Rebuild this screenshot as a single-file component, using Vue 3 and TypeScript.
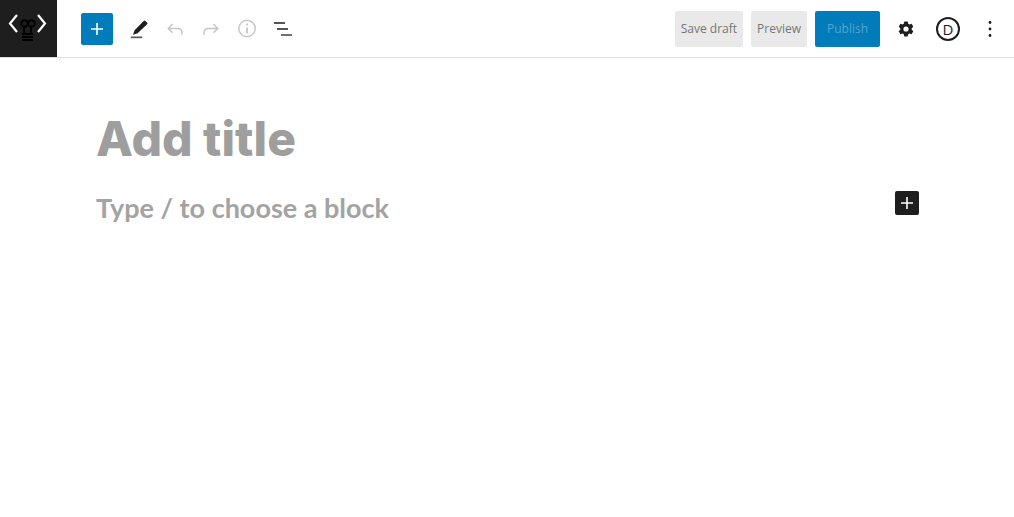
<template>
  <div class="editor">
    <header class="toolbar">
      <a class="logo" aria-label="Back">
        <svg width="57" height="57" viewBox="0 0 57 57" fill="none">
          <path d="M17 15 L10 23.5 L17 32 M38 15 L45 23.5 L38 32" stroke="#fff" stroke-width="2.2" />
          <circle cx="24.5" cy="23.5" r="3.3" stroke="#000" stroke-width="2" />
          <circle cx="31.5" cy="23.5" r="3.3" stroke="#000" stroke-width="2" />
          <path d="M24 27v6M31 27v6" stroke="#000" stroke-width="1.6" />
          <path d="M22 34h11M22 37h11M22 40h11" stroke="#000" stroke-width="1.8" />
        </svg>
      </a>
      <div class="tools">
        <button class="add" aria-label="Add block">
          <svg width="24" height="24" viewBox="0 0 24 24"><path d="M18 11.2h-5.2V6h-1.6v5.2H6v1.6h5.2V18h1.6v-5.2H18z" fill="#fff" /></svg>
        </button>
        <button class="icon" aria-label="Tools">
          <svg width="24" height="24" viewBox="0 0 24 24"><path d="M3.8 21.2h11.4v-1.7H3.8z" fill="#1e1e1e" opacity="0.75" /><path d="M20.1 5.6 18.4 4a1.2 1.2 0 0 0-1.7 0L7.6 13.2 6 17.8l4.6-1.5 9.5-9a1.2 1.2 0 0 0 0-1.7z" fill="#1e1e1e" /></svg>
        </button>
        <button class="icon" aria-label="Undo">
          <svg width="24" height="24" viewBox="0 0 24 24" fill="none" stroke="#c6c6c6" stroke-width="1.5"><path d="M9.6 7 5.2 11.4l4.4 4.3M5.4 11.4h9.6c2.4 0 3.9 1.6 3.9 4v2.4" /></svg>
        </button>
        <button class="icon" aria-label="Redo">
          <svg width="24" height="24" viewBox="0 0 24 24" fill="none" stroke="#c6c6c6" stroke-width="1.5"><path d="M14.4 7l4.4 4.4-4.4 4.3M18.6 11.4H9c-2.4 0-3.9 1.6-3.9 4v2.4" /></svg>
        </button>
        <button class="icon" aria-label="Details">
          <svg width="24" height="24" viewBox="0 0 24 24" fill="none" stroke="#c6c6c6"><circle cx="12" cy="11.5" r="8.2" stroke-width="1.5" /><path d="M12 10.5v6" stroke-width="1.8" /><path d="M12 6.6v2" stroke-width="1.8" /></svg>
        </button>
        <button class="icon" aria-label="List view">
          <svg width="24" height="24" viewBox="0 0 24 24" fill="#1e1e1e"><path d="M3 5.2h11v1.6H3zM6 11.2h11v1.6H6z" /><path d="M10 17.2h11v1.6H10z" opacity="0.8" /></svg>
        </button>
      </div>
      <div class="actions">
        <button class="text-btn">Save draft</button>
        <button class="text-btn">Preview</button>
        <button class="publish">Publish</button>
        <button class="icon" aria-label="Settings">
          <svg width="24" height="24" viewBox="0 0 24 24"><path fill="#1e1e1e" fill-rule="evenodd" d="M10.3 4.5h3.4l.5 2.2 1.3.7 2.1-.7 1.7 3-1.6 1.5v1.6l1.6 1.5-1.7 3-2.1-.7-1.3.7-.5 2.2h-3.4l-.5-2.2-1.3-.7-2.1.7-1.7-3 1.6-1.5v-1.6L4.7 9.7l1.7-3 2.1.7 1.3-.7zM12 9.4a2.6 2.6 0 1 0 0 5.2 2.6 2.6 0 0 0 0-5.2z" /></svg>
        </button>
        <button class="icon divi" aria-label="Divi">
          <span class="divi-mark">D</span>
        </button>
        <button class="icon" aria-label="Options">
          <svg width="24" height="24" viewBox="0 0 24 24" fill="#1e1e1e"><circle cx="12" cy="5.5" r="1.4" /><circle cx="12" cy="12" r="1.4" /><circle cx="12" cy="18.5" r="1.4" /></svg>
        </button>
      </div>
    </header>

    <main class="canvas">
      <h1 class="title">Add title</h1>
      <div class="block-row">
        <p class="placeholder">Type / to choose a block</p>
        <button class="inserter" aria-label="Add block">
          <svg width="24" height="24" viewBox="0 0 24 24"><path d="M18 11.2h-5.2V6h-1.6v5.2H6v1.6h5.2V18h1.6v-5.2H18z" fill="#fff" /></svg>
        </button>
      </div>
    </main>
  </div>
</template>

<script setup lang="ts">
</script>

<style>
html,
body {
  background: #fff;
}
</style>

<style scoped>
.editor {
  width: 1014px;
  height: 517px;
  overflow: hidden;
  font-family: "Open Sans", "Noto Sans", sans-serif;
}
.toolbar {
  display: flex;
  align-items: center;
  height: 57px;
  border-bottom: 1px solid #e0e0e0;
  padding-right: 6px;
}
button {
  border: 0;
  padding: 0;
  background: none;
  display: flex;
  align-items: center;
  justify-content: center;
  font-family: inherit;
}
.logo {
  width: 57px;
  height: 57px;
  background: #1e1e1e;
  display: block;
}
.tools {
  display: flex;
  align-items: center;
  margin-left: 24px;
}
.add {
  width: 32px;
  height: 32px;
  background: #007cba;
  border-radius: 2px;
  margin-right: 8px;
}
.icon {
  width: 36px;
  height: 36px;
}
.actions {
  margin-left: auto;
  display: flex;
  align-items: center;
  gap: 8px;
}
.text-btn,
.publish {
  height: 36px;
  font-size: 12px;
  border-radius: 2px;
  padding: 0 6px;
}
.text-btn {
  background: #e9e9e9;
  color: #757575;
}
.publish {
  background: #007cba;
  color: #57a5cf;
  width: 65px;
}
.divi,
.divi + .icon {
  margin-left: -2px;
}
.divi-mark {
  width: 24px;
  height: 24px;
  box-sizing: border-box;
  border: 2px solid #1e1e1e;
  border-radius: 50%;
  font-size: 15px;
  line-height: 20px;
  color: #1e1e1e;
  text-align: center;
}
.canvas {
  padding: 52px 95px 0 96px;
}
.title {
  margin: 0;
  font-family: Inter, sans-serif;
  font-weight: 800;
  font-size: 48px;
  line-height: 58px;
  color: #9e9e9e;
}
.block-row {
  display: flex;
  justify-content: space-between;
  align-items: flex-start;
  margin-top: 23px;
}
.placeholder {
  margin: 0;
  font-family: Lato, sans-serif;
  font-weight: 700;
  font-size: 27px;
  line-height: 34px;
  color: #a3a3a3;
}
.inserter {
  width: 24px;
  height: 24px;
  background: #1e1e1e;
  border-radius: 2px;
}
</style>
